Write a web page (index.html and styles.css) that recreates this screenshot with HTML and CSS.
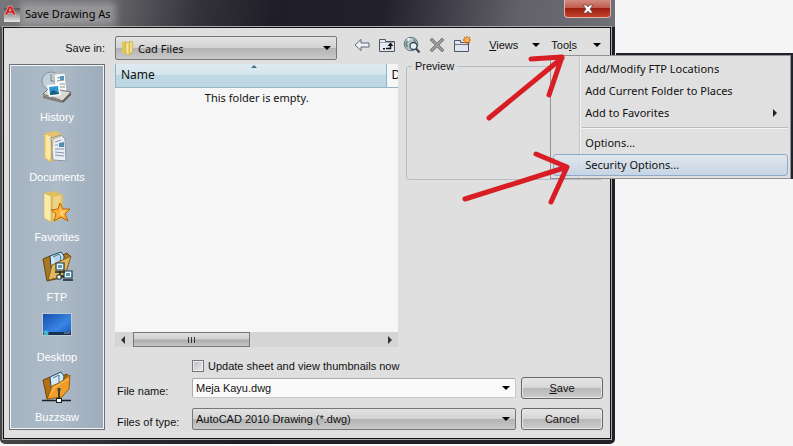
FILE: index.html
```
<!DOCTYPE html>
<html lang="en">
<head>
    <meta charset="utf-8">
    <title>Save Drawing As</title>
    <link rel="stylesheet" href="styles.css">
</head>
<body>
    <div class="dialog">
        <div class="titlebar">
            <svg class="app-icon" width="18" height="18" viewBox="0 0 18 18">
                <defs>
                    <linearGradient id="appGrey" x1="0" y1="0" x2="0" y2="1">
                        <stop offset="0" stop-color="#555"/><stop offset="1" stop-color="#e8e8e8"/>
                    </linearGradient>
                </defs>
                <rect x="1" y="3" width="16" height="14" fill="url(#appGrey)"/>
                <path d="M1.500 10L5.500 1H9L13 10H10L9.200 8H5.300L4.500 10ZM6.300 6H8.200L7.200 3.500Z" fill="#d51f26" stroke="#f4dcdc" stroke-width=".5"/>
            </svg>
            <h1>Save Drawing As</h1>
            <button type="button" class="close" aria-label="Close">
                <svg width="12" height="10" viewBox="0 0 12 10"><path d="M1 1H4.500L6 3L7.500 1H11L8 5L11 9H7.500L6 7L4.500 9H1L4 5Z" fill="#fff" stroke="#544" stroke-width=".7"/></svg>
            </button>
        </div>

        <form class="client">
            <label class="save-in" for="folder">Save in:</label>
            <div class="toolbar">
                <div class="combo folder-combo">
                    <svg class="combo-icon" width="14" height="16" viewBox="0 0 14 16">
                        <path d="M1 2L5 1V14L1 13Z" fill="#e2c65a"/><path d="M5 2L8 3V15L5 14Z" fill="#f6e9a0" stroke="#c5a53f" stroke-width=".6"/>
                        <path d="M8 1H12V14L8 15Z" fill="#d9b84b"/><path d="M9 2H11V12L9 13Z" fill="#f1de85"/><path d="M11 11H13V14H11Z" fill="#a9bccb"/>
                    </svg>
                    <select id="folder"><option>Cad Files</option></select>
                    <span class="caret"></span>
                </div>
                <div class="tools">
                    <button type="button" aria-label="Back">
                        <svg width="18" height="18" viewBox="0 0 18 18"><path d="M2 9L8 3.500V7H16V11H8V14.500Z" fill="#eef1f6" stroke="#59647b"/></svg>
                    </button>
                    <button type="button" aria-label="Up one level">
                        <svg width="18" height="18" viewBox="0 0 18 18"><path d="M1.500 15.500V3.500H7.500V5.500H16.500V15.500Z" fill="#e5e9f0" stroke="#4d5669"/><path d="M2 6.500H16" stroke="#9aa3b3"/><path d="M8 12.500H12.500V9" fill="none" stroke="#111" stroke-width="1.500"/><path d="M9.500 10L12.500 6.500L15.500 10Z" fill="#111"/><path d="M5 12H7V13.500H5Z" fill="#111"/></svg>
                    </button>
                    <button type="button" aria-label="Search the Web">
                        <svg width="18" height="18" viewBox="0 0 18 18"><circle cx="8" cy="8" r="6.800" fill="#b5cbd0" stroke="#63747b"/><path d="M2 7Q4 3 8 2L7 5L4 7L5 10L4 12Q2 10 2 7ZM10 2Q13 4 14 7L11 6Z" fill="#758b8c"/><path d="M4 3Q6 1 8 3L5 6Z" fill="#f1f7f7"/><circle cx="10.500" cy="10" r="3.500" fill="#e6eff5" stroke="#3d4a56" stroke-width="1.300"/><path d="M13 12.500L16.500 16.500" stroke="#384451" stroke-width="2"/></svg>
                    </button>
                    <button type="button" aria-label="Delete">
                        <svg width="18" height="18" viewBox="0 0 18 18"><path d="M2 4L4 2L9 7L14 2L16 4L11 9L16 14L14 16L9 11L4 16L2 14L7 9Z" fill="#999" stroke="#808080"/></svg>
                    </button>
                    <button type="button" aria-label="Create New Folder">
                        <svg width="18" height="18" viewBox="0 0 18 18"><path d="M1.500 15.500V4.500H7.500V6.500H15.500V15.500Z" fill="#dfe5ee" stroke="#4d5669"/><path d="M2 8.500H15" stroke="#6c7588"/><path d="M14 0V8M9.800 4H18M11 1L17 7M17 1L11 7" stroke="#d96a19" stroke-width="1.300"/><circle cx="14" cy="4" r="2" fill="#ffc04d"/></svg>
                    </button>
                </div>
                <button type="button" class="menu-button"><span><u>V</u>iews</span><span class="caret"></span></button>
                <div class="menu-anchor">
                    <button type="button" class="menu-button" aria-haspopup="true" aria-expanded="true"><span>Too<u>l</u>s</span><span class="caret"></span></button>
                    <div class="menu-shell">
                        <ul class="menu">
                            <li><button type="button">Add/Modify FTP Locations</button></li>
                            <li><button type="button">Add Current Folder to Places</button></li>
                            <li><button type="button">Add to Favorites<span class="submenu"></span></button></li>
                            <li class="separator"></li>
                            <li><button type="button">Options...</button></li>
                            <li><button type="button" class="active">Security Options...</button></li>
                        </ul>
                    </div>
                </div>
            </div>

            <nav class="places">
                <a href="#history">
                    <svg width="32" height="32" viewBox="0 0 32 32">
                        <circle cx="10" cy="10" r="9" fill="#c3d0d7" stroke="#8195a0"/><path d="M10 3V10H17" fill="none" stroke="#71838e"/>
                        <path d="M13 3L24 2L26 21L14 22Z" fill="#f7f9fa" stroke="#aab2b8"/><path d="M16 7L22 6M16 10L23 9M19 13H24M19 16H24" stroke="#8a949c"/><path d="M19 5H23V9H19Z" fill="#5596bb"/>
                        <path d="M2 23L8 17L30 21L22 30Z" fill="#d9d9d5" stroke="#77736d"/><path d="M2 24L21 30V32L2 27Z" fill="#817d77"/><path d="M21 30L30 21V24L22 32Z" fill="#5f5c58"/>
                        <path d="M6 14L18 13L20 24L8 26Z" fill="#fff"/><path d="M8 16L17 15L18 23L9 24Z" fill="#3195d3"/><path d="M9 22L12 19L18 22L18 23L9 24Z" fill="#176179"/>
                    </svg>
                    <span>History</span>
                </a>
                <a href="#documents">
                    <svg width="32" height="32" viewBox="0 0 32 32">
                        <path d="M3 2L15 0L22 4V27L10 31L3 27Z" fill="#e4c46a"/><path d="M4 3L10 5V31L4 27Z" fill="#fae8a4" stroke="#c9aa50" stroke-width=".5"/>
                        <path d="M10 7L20 4L24 8L25 30L12 29Z" fill="#e9eef5" stroke="#8b97a4"/><path d="M14 11L20 9M14 14L17 14M14 18L23 18M14 21L23 22M14 24L23 25" stroke="#8b94a8"/><path d="M18 12L23 11V16L18 16Z" fill="#538fb5"/><path d="M10 31L12 8L20 5" fill="none" stroke="#c8a953"/>
                    </svg>
                    <span>Documents</span>
                </a>
                <a href="#favorites">
                    <svg width="32" height="32" viewBox="0 0 32 32">
                        <path d="M3 2L14 0L22 4V28L10 31L3 27Z" fill="#dfbd61"/><path d="M3 2L10 5V31L3 27Z" fill="#faeaa9" stroke="#c9a74b" stroke-width=".5"/><path d="M12 6L20 4V25L12 28Z" fill="#eed385"/>
                        <path d="M19 12L22 18L29 18L24 23L27 30L20 26L13 30L15 23L10 19L17 18Z" fill="#ffad31" stroke="#b46a19"/><path d="M19 14L20 20L26 19L22 22L23 26L19 24Z" fill="#ffd273"/>
                    </svg>
                    <span>Favorites</span>
                </a>
                <a href="#ftp">
                    <svg width="32" height="32" viewBox="0 0 32 32">
                        <path d="M2 8L9 5L12 9L26 2L29 5L24 26L6 30Z" fill="#a97825" stroke="#634514"/><path d="M9 5L20 1L23 5L22 23L11 26Z" fill="#d4eaf6" stroke="#20445a"/><path d="M12 6L18 3L20 6L18 18" fill="#b0d7ed" stroke="#407089"/>
                        <path d="M7 29L11 14L30 5L24 25Z" fill="#e2b75b" stroke="#80601f"/>
                        <path d="M15 12H23V19H15ZM23 20H31V27H23Z" fill="#e7f4f7" stroke="#213c4b" stroke-width="1.200"/><path d="M17 14H21V17H17ZM25 22H29V25H25Z" fill="#579bc0"/><path d="M14 21H24M22 29H32M19 20V25H23" fill="none" stroke="#18262e" stroke-width="1.500"/><path d="M16 24H20V28H16Z" fill="#fff" stroke="#182b35"/>
                    </svg>
                    <span>FTP</span>
                </a>
                <a href="#desktop">
                    <svg width="32" height="32" viewBox="0 0 32 32">
                        <defs><linearGradient id="screen" x1="0" y1="0" x2="1" y2="1"><stop offset="0" stop-color="#164dac"/><stop offset=".6" stop-color="#3986e4"/><stop offset="1" stop-color="#1453b5"/></linearGradient></defs>
                        <rect x="1.500" y="2.500" width="29" height="22" fill="url(#screen)" stroke="#c1cbd3"/><path d="M2 21H30V24H2Z" fill="#17334f"/><circle cx="5" cy="22" r="2.500" fill="#47b8d0"/><path d="M23 22H29" stroke="#849bad"/>
                    </svg>
                    <span>Desktop</span>
                </a>
                <a href="#buzzsaw">
                    <svg width="32" height="32" viewBox="0 0 32 32">
                        <path d="M2 9L9 6L12 9L26 3L28 7L22 25L6 28Z" fill="#b36d12" stroke="#6f4610"/><path d="M9 6L20 1L23 5L21 22L11 25Z" fill="#d4eaf6" stroke="#244e67"/><path d="M12 7L18 4V16" fill="none" stroke="#487890"/>
                        <path d="M6 28L11 15L18 12L29 4L28 18L21 26Z" fill="#ee9d29" stroke="#9a5d11"/><path d="M9 25L13 17L27 8" fill="none" stroke="#ffc45c"/>
                        <path d="M18 18V28M1 29.500H30" stroke="#18212a" stroke-width="1.500"/><rect x="15.500" y="27.500" width="5" height="4" fill="#fff" stroke="#222"/><path d="M16.500 17H19.500V20H16.500Z" fill="#444"/>
                    </svg>
                    <span>Buzzsaw</span>
                </a>
            </nav>

            <div class="main">
                <div class="browse">
                    <div class="file-list">
                        <table>
                            <thead><tr><th class="name">Name</th><th class="date">D</th></tr></thead>
                            <tbody><tr><td colspan="2">This folder is empty.</td></tr></tbody>
                        </table>
                        <div class="scrollbar"><span class="arrow-left"></span><span class="thumb"><i></i><i></i><i></i></span><span class="arrow-right"></span></div>
                    </div>
                    <fieldset class="preview"><legend>Preview</legend></fieldset>
                </div>

                <label class="check"><input type="checkbox">Update sheet and view thumbnails now</label>
                <div class="fields">
                    <label for="filename">File name:</label>
                    <div class="combo file-combo">
                        <input type="text" id="filename" value="Meja Kayu.dwg">
                        <span class="caret"></span>
                    </div>
                    <button type="submit" class="action"><u>S</u>ave</button>
                    <label for="filetype">Files of type:</label>
                    <div class="combo">
                        <select id="filetype"><option>AutoCAD 2010 Drawing (*.dwg)</option></select>
                        <span class="caret"></span>
                    </div>
                    <button type="button" class="action">Cancel</button>
                </div>
            </div>
        </form>
    </div>

    <!-- red pointers to Tools and Security Options -->
    <svg class="pointers" width="793" height="446" viewBox="0 0 793 446">
        <path d="M489 118L562 58M531 59L562 57L549 95"/>
        <path d="M465 199L567 167M536 154L567 167L551 202"/>
    </svg>
</body>
</html>
```

FILE: styles.css
```
* {
    box-sizing: border-box;
}
body {
    margin: 0;
    background-color: #f5f5f5;
    color: #111;
    font-family: "Liberation Sans", Arial, sans-serif;
    font-size: 11px;
    line-height: 14px;
}
button, input, select {
    font: inherit;
    color: inherit;
    margin: 0;
}
button {
    border: none;
    background: none;
    padding: 0;
}

/* window frame */
.dialog {
    margin-right: 178px;
    padding: 0 4px 5px 3px;
    background: linear-gradient(100deg, #555 0, #2a2930 30%, #201f29 45%, #211f29 100%);
    border-radius: 0 0 5px 5px;
}
.titlebar {
    display: flex;
    align-items: center;
    height: 27px;
    margin: 0 -4px 0 -3px;
    padding: 0 4px 0 3px;
    background: linear-gradient(100deg, #77777a 0, #6a6a6e 17%, #34333b 32%, #1f1e28 45%, #22212b 62%, #62616a 84%, #707076 100%);
}
.titlebar h1 {
    margin: 0 auto 0 4px;
    font: 11px/14px "Noto Sans", sans-serif;
    color: #000;
    background-color: rgba(190, 190, 190, 0.5);
    box-shadow: 0 0 7px 5px rgba(190, 190, 190, 0.5);
}
.app-icon {
    position: relative;
}
.close {
    align-self: flex-start;
    width: 47px;
    height: 18px;
    border: 1px solid #e0b4ac;
    border-top: none;
    border-radius: 0 0 4px 4px;
    background: linear-gradient(#d28b80 0, #c25c4b 45%, #9d1f10 50%, #c5412b 100%);
    line-height: 8px;
}
.client {
    display: grid;
    grid-template-columns: 96px 1fr;
    gap: 4px 10px;
    padding: 8px 7px 8px 5px;
    border: 1px solid #111;
    box-shadow: 0 0 0 1px #aaa;
    background-color: #dfdfdf;
}

/* top row */
.save-in {
    text-align: right;
    line-height: 24px;
}
.toolbar {
    display: flex;
    align-items: flex-start;
}
.combo {
    display: flex;
    align-items: center;
    height: 22px;
    padding-right: 5px;
    border: 1px solid #777;
    border-radius: 2px;
    background: linear-gradient(#e3e3e3 0, #d3d3d3 48%, #b4b4b4 52%, #c9c9c9 100%);
}
.combo select, .combo input {
    flex: 1;
    min-width: 0;
    width: 0;
    height: 100%;
    padding: 0 3px;
    border: none;
    background: none;
    appearance: none;
    outline: none;
}
.folder-combo {
    flex: 1;
    height: 24px;
    padding-left: 5px;
}
.folder-combo select {
    font: 11px "Noto Sans", sans-serif;
}
.caret {
    width: 0;
    border: 4px solid transparent;
    border-top-color: #000;
    border-bottom: none;
}
.tools {
    display: flex;
    gap: 7px;
    margin: 0 18px 0 16px;
}
.tools button {
    width: 18px;
    height: 18px;
}
.tools svg {
    display: block;
}
.menu-button {
    display: flex;
    align-items: center;
    gap: 14px;
    height: 18px;
}
.menu-anchor {
    position: relative;
    margin: 0 2px 0 11px;
}
.menu-anchor .menu-button {
    gap: 16px;
}

/* tools menu */
.menu-shell {
    position: absolute;
    z-index: 2;
    top: 19px;
    left: -1px;
    width: 241px;
    background-color: #dedede;
}
.menu-shell::before {
    content: "";
    position: absolute;
    z-index: -1;
    top: -2px;
    left: 66px;
    right: -4px;
    bottom: 0;
    background-color: #20232c;
}
.menu {
    margin: 0;
    padding: 2px;
    list-style: none;
    border: 1px solid #929292;
    background: linear-gradient(90deg, #dedede 28px, #c6c6c6 28px, #c6c6c6 29px, #f3f3f3 29px, #f3f3f3 30px, #e0e0e0 30px);
    font: 11px/20px "Noto Sans", sans-serif;
}
.menu li {
    height: 22px;
}
.menu button {
    display: flex;
    align-items: center;
    justify-content: space-between;
    width: 100%;
    height: 22px;
    padding: 0 10px 0 31px;
    border: 1px solid transparent;
    border-radius: 3px;
    white-space: nowrap;
}
.menu .active {
    border-color: #8faac6;
    background: linear-gradient(rgba(225, 232, 240, 0.8), rgba(192, 209, 228, 0.8));
}
.submenu {
    border: 4px solid transparent;
    border-left-color: #222;
    border-right: none;
}
.menu .separator {
    height: 8px;
    margin-left: 29px;
    background: linear-gradient(transparent 3px, #bbb 3px, #bbb 4px, #f5f5f5 4px, #f5f5f5 5px, transparent 5px);
}

/* places bar */
.places {
    padding-top: 6px;
    border: 1px solid #6a6f75;
    box-shadow: inset 0 0 0 1px #f4f4f4;
    background: linear-gradient(90deg, #a6b4c3, #adbac7 50%, #9dacbb);
}
.places a {
    display: flex;
    flex-direction: column;
    align-items: center;
    height: 60px;
    color: #fff;
    text-decoration: none;
}
.places a:last-child {
    height: 56px;
}
.places svg {
    margin-bottom: 7px;
}

/* file list and preview */
.main {
    display: flex;
    flex-direction: column;
}
.browse {
    display: grid;
    grid-template-columns: 1fr 197px;
    gap: 8px;
    align-items: start;
}
.file-list {
    display: flex;
    flex-direction: column;
    height: 283px;
    background-color: #f6f6f6;
}
.file-list table {
    width: 100%;
    border-collapse: collapse;
    table-layout: fixed;
    font: 11px/20px "Noto Sans", sans-serif;
}
.file-list th {
    height: 23px;
    padding: 0 5px;
    border-bottom: 1px solid #8fb7c8;
    background: linear-gradient(#dfeaf0 0, #d5e5ed 45%, #bdd8e4 50%, #bdd6e2 100%);
    font-size: 12px;
    font-weight: normal;
    text-align: left;
}
.file-list .name {
    position: relative;
    border-left: 1px solid #84b9cf;
    border-right: 1px solid #84b9cf;
}
.name::after {
    content: "";
    position: absolute;
    top: 1px;
    left: 50%;
    border: 3px solid transparent;
    border-bottom-color: #40758c;
    border-top: none;
}
.file-list .date {
    width: 12px;
    overflow: hidden;
    background: #f6f6f6;
}
.file-list td {
    padding: 0;
    text-align: center;
}
.scrollbar {
    display: flex;
    align-items: center;
    height: 15px;
    margin-top: auto;
    padding: 0 6px;
    background-color: #d5d5d5;
}
.arrow-left, .arrow-right {
    border: 4px solid transparent;
}
.arrow-left {
    border-right-color: #333;
    border-left: none;
}
.arrow-right {
    margin-left: auto;
    border-left-color: #333;
    border-right: none;
}
.thumb {
    display: flex;
    align-items: center;
    justify-content: center;
    gap: 2px;
    width: 117px;
    height: 15px;
    margin-left: 8px;
    border: 1px solid #777;
    background: linear-gradient(#dfdfdf 0, #d0d0d0 48%, #ababab 52%, #c5c5c5 100%);
}
.thumb i {
    width: 1px;
    height: 6px;
    background-color: #333;
}
.preview {
    height: 121px;
    margin: -5px 0 0;
    padding: 0;
    border: 1px solid #b4bdc5;
    border-radius: 3px;
}
.preview legend {
    margin-left: 5px;
    padding: 0 3px;
}

/* bottom fields */
.check {
    display: flex;
    align-items: center;
    gap: 4px;
    height: 16px;
    margin: 11px 0 3px 77px;
}
.check input {
    width: 12px;
    height: 12px;
    border: 1px solid #777;
    box-shadow: inset 0 0 0 1px #eee;
    background: linear-gradient(135deg, #b8bcc4, #eee);
    appearance: none;
}
.fields {
    display: grid;
    grid-template-columns: 72px 1fr 82px;
    gap: 9px 5px;
    align-items: center;
}
.fields > label {
    padding: 6px 0 0 2px;
}
.file-combo {
    height: 20px;
    background: #fafafa;
    border-color: #aaa #c8c8c8 #c8c8c8 #aaa;
}
.action {
    height: 22px;
    border: 1px solid #666;
    border-radius: 3px;
    background: linear-gradient(#e6e6e6 0, #d6d6d6 48%, #b8b8b8 52%, #cccccc 100%);
    box-shadow: inset 0 0 0 1px #e6e6e6;
}

.pointers {
    position: absolute;
    z-index: 3;
    top: 0;
    left: 0;
    fill: none;
    stroke: #d81e24;
    stroke-width: 5;
    stroke-linecap: round;
    stroke-linejoin: round;
    pointer-events: none;
}
```
